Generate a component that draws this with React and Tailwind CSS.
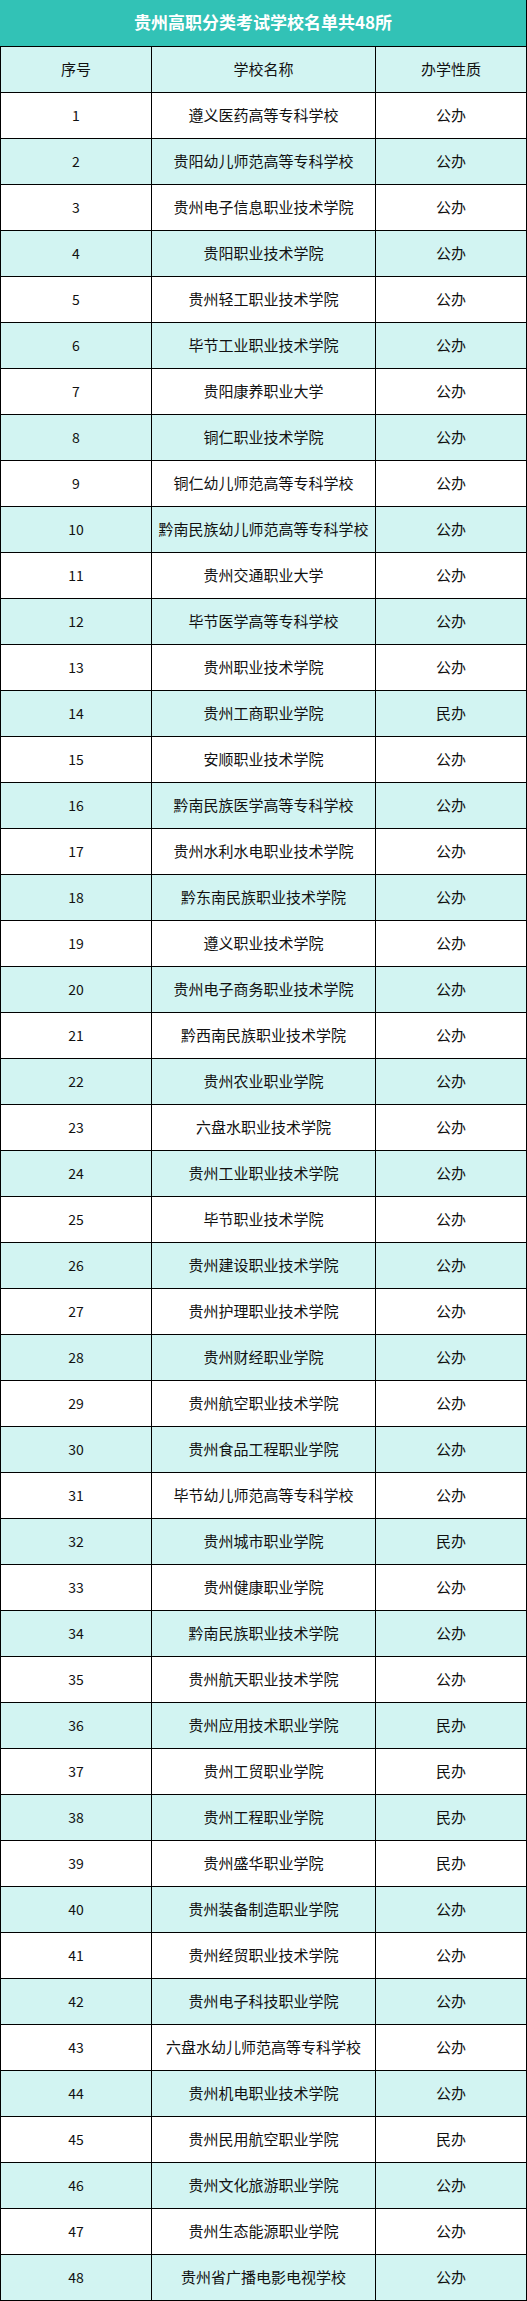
import React from 'react';

const schools = [
  ['遵义医药高等专科学校', '公办'],
  ['贵阳幼儿师范高等专科学校', '公办'],
  ['贵州电子信息职业技术学院', '公办'],
  ['贵阳职业技术学院', '公办'],
  ['贵州轻工职业技术学院', '公办'],
  ['毕节工业职业技术学院', '公办'],
  ['贵阳康养职业大学', '公办'],
  ['铜仁职业技术学院', '公办'],
  ['铜仁幼儿师范高等专科学校', '公办'],
  ['黔南民族幼儿师范高等专科学校', '公办'],
  ['贵州交通职业大学', '公办'],
  ['毕节医学高等专科学校', '公办'],
  ['贵州职业技术学院', '公办'],
  ['贵州工商职业学院', '民办'],
  ['安顺职业技术学院', '公办'],
  ['黔南民族医学高等专科学校', '公办'],
  ['贵州水利水电职业技术学院', '公办'],
  ['黔东南民族职业技术学院', '公办'],
  ['遵义职业技术学院', '公办'],
  ['贵州电子商务职业技术学院', '公办'],
  ['黔西南民族职业技术学院', '公办'],
  ['贵州农业职业学院', '公办'],
  ['六盘水职业技术学院', '公办'],
  ['贵州工业职业技术学院', '公办'],
  ['毕节职业技术学院', '公办'],
  ['贵州建设职业技术学院', '公办'],
  ['贵州护理职业技术学院', '公办'],
  ['贵州财经职业学院', '公办'],
  ['贵州航空职业技术学院', '公办'],
  ['贵州食品工程职业学院', '公办'],
  ['毕节幼儿师范高等专科学校', '公办'],
  ['贵州城市职业学院', '民办'],
  ['贵州健康职业学院', '公办'],
  ['黔南民族职业技术学院', '公办'],
  ['贵州航天职业技术学院', '公办'],
  ['贵州应用技术职业学院', '民办'],
  ['贵州工贸职业学院', '民办'],
  ['贵州工程职业学院', '民办'],
  ['贵州盛华职业学院', '民办'],
  ['贵州装备制造职业学院', '公办'],
  ['贵州经贸职业技术学院', '公办'],
  ['贵州电子科技职业学院', '公办'],
  ['六盘水幼儿师范高等专科学校', '公办'],
  ['贵州机电职业技术学院', '公办'],
  ['贵州民用航空职业学院', '民办'],
  ['贵州文化旅游职业学院', '公办'],
  ['贵州生态能源职业学院', '公办'],
  ['贵州省广播电影电视学校', '公办'],
];

const Row = ({ cells, shaded }) => (
  <div
    className={`grid grid-cols-[151px_224px_1fr] h-[46px] border-l border-b border-black ${
      shaded ? 'bg-[#d2f4f2]' : 'bg-white'
    }`}
  >
    {cells.map((c, i) => (
      <div key={i} className="flex items-center justify-center border-r border-black">
        {c}
      </div>
    ))}
  </div>
);

export default function App() {
  return (
    <div
      className="w-[527px] bg-white text-[15px] text-[#111]"
      style={{ fontFamily: '"Noto Sans CJK SC", "Noto Sans", sans-serif' }}
    >
      {/* Title */}
      <div className="h-[47px] bg-[#32c2b6] border-b border-r border-black flex items-center justify-center">
        <span className="text-white font-bold text-[17px] pb-[2px]">贵州高职分类考试学校名单共48所</span>
      </div>

      {/* Header */}
      <Row cells={['序号', '学校名称', '办学性质']} shaded />

      {schools.map(([name, type], idx) => (
        <Row
          key={idx}
          cells={[<span className="text-[14px]">{idx + 1}</span>, name, type]}
          shaded={idx % 2 === 1}
        />
      ))}
    </div>
  );
}
